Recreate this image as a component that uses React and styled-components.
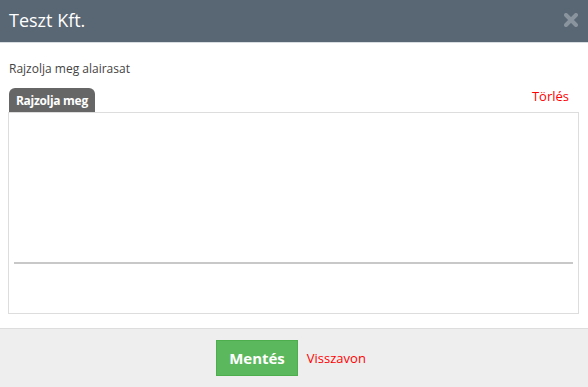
import styled, { createGlobalStyle } from "styled-components"

const GlobalStyle = createGlobalStyle`
  html, body {
    margin: 0;
    padding: 0;
    background: #fff;
  }
  body {
    font-family: "Open Sans", "Liberation Sans", sans-serif;
  }
`

const Modal = styled.div`
  width: 588px;
  height: 387px;
  display: flex;
  flex-direction: column;
  background: #fff;
`

const Header = styled.header`
  height: 43px;
  box-sizing: border-box;
  background: #596673;
  display: flex;
  align-items: center;
  justify-content: space-between;
  padding: 0 10px 2px 9px;
  border-bottom: 1px solid #d8dde2;
`

const Title = styled.h3`
  margin: 0;
  font-size: 18px;
  font-weight: 400;
  color: #fff;
`

const CloseBtn = styled.button`
  border: 0;
  background: none;
  padding: 0;
  display: flex;
  cursor: pointer;
`

const Body = styled.div`
  flex: 1;
  padding: 17px 9px 14px 8px;
`

const Label = styled.p`
  margin: 0 0 10px 1px;
  font-size: 12px;
  color: #444;
`

const TabRow = styled.div`
  display: flex;
  align-items: flex-end;
  justify-content: space-between;
`

const Tab = styled.div`
  margin-left: 1px;
  height: 24px;
  padding: 0 7px;
  display: flex;
  align-items: center;
  background: #666;
  border-radius: 6px 6px 0 0;
  color: #fff;
  font-size: 12px;
  font-weight: 700;
  letter-spacing: -0.3px;
`

const Link = styled.a`
  color: #f00;
  font-size: 13px;
  text-decoration: none;
  cursor: pointer;
  margin: ${(p) => p.$margin || "0"};
`

const Pad = styled.div`
  height: 202px;
  box-sizing: border-box;
  border: 1px solid #ddd;
  display: flex;
  flex-direction: column;
  justify-content: flex-end;
  padding: 0 5px 49px 5px;
`

const SignLine = styled.div`
  height: 2px;
  background: #c8c8c8;
`

const Footer = styled.footer`
  height: 59px;
  box-sizing: border-box;
  background: #eee;
  border-top: 1px solid #ddd;
  display: flex;
  align-items: center;
  justify-content: center;
  gap: 9px;
  padding-right: 6px;
`

const SaveBtn = styled.button`
  height: 36px;
  padding: 0 12px;
  border: 1px solid #4cae4c;
  background: #5cb85c;
  color: #fff;
  font-family: inherit;
  font-size: 15px;
  font-weight: 700;
  cursor: pointer;
`

const App = () => {
  return (
    <>
      <GlobalStyle />
      <Modal>
        <Header>
          <Title>Teszt Kft.</Title>
          <CloseBtn aria-label="close">
            <svg width="14" height="14" viewBox="0 0 14 14">
              <path d="M2 2 L12 12 M12 2 L2 12" stroke="#8a949e" strokeWidth="4" strokeLinecap="round" />
            </svg>
          </CloseBtn>
        </Header>
        <Body>
          <Label>Rajzolja meg alairasat</Label>
          <TabRow>
            <Tab>Rajzolja meg</Tab>
            <Link $margin="0 10px 7px 0">Törlés</Link>
          </TabRow>
          <Pad>
            <SignLine />
          </Pad>
        </Body>
        <Footer>
          <SaveBtn>Mentés</SaveBtn>
          <Link>Visszavon</Link>
        </Footer>
      </Modal>
    </>
  )
}

export default App
